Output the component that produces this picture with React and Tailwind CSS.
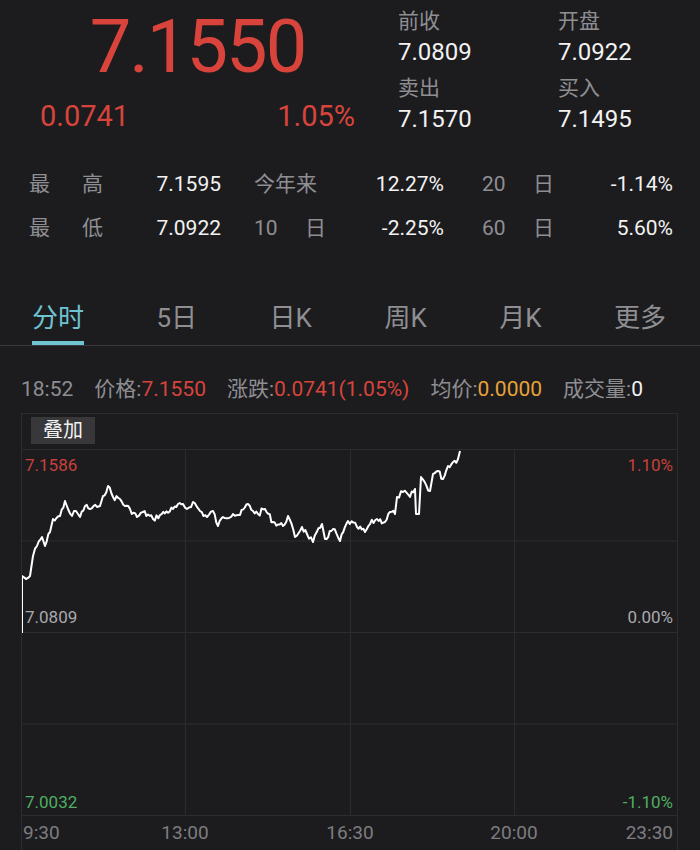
import React from "react";

const keyPoints = [
  [22, 634], [22, 577], [26, 580], [30, 577], [33, 557], [37, 547], [42, 538], [45, 547], [50, 533], [53, 520],
  [60, 517], [65, 502], [68, 510], [72, 517], [76, 512], [80, 518], [85, 507], [90, 510], [97, 508], [100, 507],
  [103, 497], [108, 487], [113, 498], [120, 500], [125, 507], [130, 510], [137, 518], [143, 513], [153, 520],
  [160, 516], [173, 510], [183, 505], [187, 510], [193, 503], [200, 512], [207, 518], [213, 512], [218, 527],
  [223, 518], [233, 515], [240, 516], [248, 505], [253, 512], [258, 515], [265, 510], [273, 523], [283, 527],
  [288, 517], [295, 538], [302, 528], [307, 535], [313, 543], [322, 525], [325, 540], [333, 530], [340, 542],
  [348, 522], [357, 528], [365, 533], [370, 525], [377, 520], [385, 523], [390, 513], [395, 515], [397, 498],
  [403, 493], [410, 498], [415, 490], [416, 515], [419, 515], [421, 478], [430, 492], [433, 475], [438, 472],
  [443, 480], [448, 467], [453, 463], [458, 460], [460, 452],
];

// jitter between key points so the line looks like a tick series
const buildPath = () => {
  const pts = [];
  let seed = 7;
  const rnd = () => {
    seed = (seed * 9301 + 49297) % 233280;
    return seed / 233280;
  };
  for (let i = 0; i < keyPoints.length - 1; i++) {
    const [x1, y1] = keyPoints[i];
    const [x2, y2] = keyPoints[i + 1];
    pts.push([x1, y1]);
    const steps = Math.floor((x2 - x1) / 1.6);
    for (let s = 1; s < steps; s++) {
      const t = s / steps;
      const x = x1 + (x2 - x1) * t;
      const y = y1 + (y2 - y1) * t + (rnd() - 0.5) * 6;
      pts.push([x, y]);
    }
  }
  pts.push(keyPoints[keyPoints.length - 1]);
  return pts.map(([x, y], i) => `${i ? "L" : "M"}${(x - 22).toFixed(1)} ${(y - 450).toFixed(1)}`).join(" ");
};

const linePath = buildPath();

const StatLabel = ({ a, b, w = "w-[74px]" }) => (
  <div className={`flex justify-between ${w} text-[#8e8e93]`}>
    <span>{a}</span>
    <span>{b}</span>
  </div>
);

const tabs = ["分时", "5日", "日K", "周K", "月K", "更多"];

const App = () => {
  return (
    <div className="w-[700px] h-[850px] overflow-hidden bg-[#1c1c1e] font-[Roboto,'Noto_Sans_CJK_SC',sans-serif] flex flex-col">
      {/* quote header */}
      <div className="flex h-[150px]">
        <div className="w-[398px] pl-[40px] pr-[43px] pt-[9px]">
          <div className="text-center text-[74px] leading-[76px] text-[#d8443c] tracking-[-2px]">7.1550</div>
          <div className="flex justify-between text-[29px] leading-[36px] text-[#d8443c] mt-[13px]">
            <span>0.0741</span>
            <span>1.05%</span>
          </div>
        </div>
        <div className="grid grid-cols-[160px_140px] content-start pt-[6px]">
          <div>
            <p className="text-[21px] leading-[30px] text-[#8e8e93]">前收</p>
            <p className="text-[24px] leading-[32px] text-[#f2f2f2]">7.0809</p>
          </div>
          <div>
            <p className="text-[21px] leading-[30px] text-[#8e8e93]">开盘</p>
            <p className="text-[24px] leading-[32px] text-[#f2f2f2]">7.0922</p>
          </div>
          <div className="mt-[5px]">
            <p className="text-[21px] leading-[30px] text-[#8e8e93]">卖出</p>
            <p className="text-[24px] leading-[32px] text-[#f2f2f2]">7.1570</p>
          </div>
          <div className="mt-[5px]">
            <p className="text-[21px] leading-[30px] text-[#8e8e93]">买入</p>
            <p className="text-[24px] leading-[32px] text-[#f2f2f2]">7.1495</p>
          </div>
        </div>
      </div>

      {/* range stats */}
      <div className="pl-[29px] pt-[14px] text-[21px] leading-[44px]">
        <div className="flex">
          <StatLabel a="最" b="高" />
          <div className="w-[118px] text-right text-[#f2f2f2]">7.1595</div>
          <div className="ml-[33px] w-[72px] text-[#8e8e93]">今年来</div>
          <div className="w-[118px] text-right text-[#f2f2f2]">12.27%</div>
          <StatLabel a="20" b="日" w="ml-[38px] w-[72px]" />
          <div className="w-[119px] text-right text-[#f2f2f2]">-1.14%</div>
        </div>
        <div className="flex">
          <StatLabel a="最" b="低" />
          <div className="w-[118px] text-right text-[#f2f2f2]">7.0922</div>
          <StatLabel a="10" b="日" w="ml-[33px] w-[72px]" />
          <div className="w-[118px] text-right text-[#f2f2f2]">-2.25%</div>
          <StatLabel a="60" b="日" w="ml-[38px] w-[72px]" />
          <div className="w-[119px] text-right text-[#f2f2f2]">5.60%</div>
        </div>
      </div>

      {/* period tabs */}
      <div className="mt-[51px] flex justify-between pl-[32px] pr-[34px] border-b border-[#3a3a3c] text-[26px] leading-[34px]">
        {tabs.map((t, i) => (
          <div key={t} className={i === 0 ? "text-[#6fc2d0] border-b-4 border-[#6fc2d0] pb-[6px]" : "text-[#8e8e93] pb-[10px]"}>
            {t}
          </div>
        ))}
      </div>

      {/* tick info */}
      <div className="flex items-start h-[68px] pt-[30px] pl-[21px] text-[21px] leading-[26px] text-[#8e8e93] gap-[21px]">
        <span>18:52</span>
        <span>
          价格:<span className="text-[#d8443c]">7.1550</span>
        </span>
        <span>
          涨跌:<span className="text-[#d8443c]">0.0741(1.05%)</span>
        </span>
        <span>
          均价:<span className="text-[#e8a23a]">0.0000</span>
        </span>
        <span>
          成交量:<span className="text-[#f2f2f2]">0</span>
        </span>
      </div>

      {/* chart */}
      <div className="ml-[21px] w-[657px] flex-1 border-l border-r border-t border-[#2c2c2e] flex flex-col">
        <div className="h-[35px] pl-[9px] pt-[3px]">
          <div className="w-[64px] h-[27px] bg-[#38383b] text-[#f2f2f2] text-[20px] leading-[27px] text-center">叠加</div>
        </div>
        <div className="relative h-[367px]">
          <svg width="655" height="367" className="block">
            {[0.5, 92, 183.5, 275, 366.5].map((y) => (
              <line key={y} x1="0" x2="655" y1={y} y2={y} stroke="#2c2c2e" strokeWidth="1" />
            ))}
            {[163.5, 328.5, 492.5].map((x) => (
              <line key={x} x1={x} x2={x} y1="0" y2="367" stroke="#2c2c2e" strokeWidth="1" />
            ))}
            <path d={linePath} fill="none" stroke="#ffffff" strokeWidth="2" strokeLinejoin="round" />
          </svg>
          <span className="absolute left-[3px] top-[6px] text-[17px] leading-[20px] text-[#c9403a]">7.1586</span>
          <span className="absolute right-[4px] top-[6px] text-[17px] leading-[20px] text-[#c9403a]">1.10%</span>
          <span className="absolute left-[3px] top-[158px] text-[17px] leading-[20px] text-[#a9a9ad]">7.0809</span>
          <span className="absolute right-[4px] top-[158px] text-[17px] leading-[20px] text-[#a9a9ad]">0.00%</span>
          <span className="absolute left-[3px] top-[343px] text-[17px] leading-[20px] text-[#4fae63]">7.0032</span>
          <span className="absolute right-[4px] top-[343px] text-[17px] leading-[20px] text-[#4fae63]">-1.10%</span>
        </div>
        <div className="relative h-[34px] text-[19px] leading-[34px] text-[#7c7c80]">
          <span className="absolute left-[1px]">9:30</span>
          <span className="absolute left-[163px] -translate-x-1/2">13:00</span>
          <span className="absolute left-[328px] -translate-x-1/2">16:30</span>
          <span className="absolute left-[492px] -translate-x-1/2">20:00</span>
          <span className="absolute right-[4px]">23:30</span>
        </div>
      </div>
    </div>
  );
};

export default App;
